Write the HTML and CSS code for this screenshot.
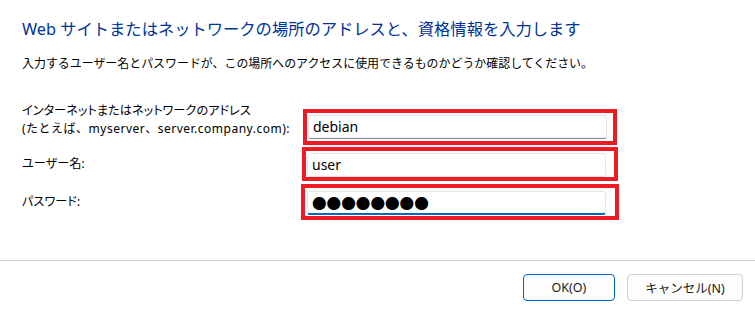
FILE: index.html
```html
<!DOCTYPE html>
<html lang="ja">
<head>
<meta charset="utf-8">
<title>資格情報の入力</title>
<link rel="stylesheet" href="styles.css">
</head>
<body>
<div class="dialog">
  <div class="content">
    <h1 class="title">Web サイトまたはネットワークの場所のアドレスと、資格情報を入力します</h1>
    <p class="desc">入力するユーザー名とパスワードが、この場所へのアクセスに使用できるものかどうか確認してください。</p>
    <div class="form">
      <div class="label label-top"><span class="kana">インターネットまたはネットワークのアドレス</span><br><span class="example">(たとえば、myserver、server.company.com):</span></div>
      <div class="mark mark-1"><div class="field field-default">debian</div></div>
      <div class="label"><span class="kana">ユーザー名:</span></div>
      <div class="mark mark-2"><div class="field field-plain">user</div></div>
      <div class="label"><span class="kana">パスワード:</span></div>
      <div class="mark mark-3"><div class="field field-focus"><span class="dots">●●●●●●●●</span></div></div>
    </div>
  </div>
  <div class="footer">
    <button class="btn btn-primary">OK(O)</button>
    <button class="btn">キャンセル(N)</button>
  </div>
</div>
</body>
</html>
```

FILE: styles.css
```css
html, body {
  margin: 0;
  padding: 0;
  background: #ffffff;
}
body {
  width: 755px;
  height: 312px;
  overflow: hidden;
  font-family: "Noto Sans", "Noto Sans CJK JP", sans-serif;
  color: #000;
}
.dialog {
  display: flex;
  flex-direction: column;
  height: 312px;
}
.content {
  padding: 17px 0 0 22px;
  height: 260px;
  box-sizing: border-box;
}
.title {
  margin: 0;
  font-weight: normal;
  font-size: 16.3px;
  line-height: 24px;
  color: #003399;
}
.desc {
  margin: 14px 0 0 0;
  font-size: 11.95px;
  line-height: 18px;
}
.form {
  margin-top: 36px;
  display: grid;
  grid-template-columns: 279px auto;
  row-gap: 2px;
  align-items: center;
  justify-items: start;
}
.label {
  font-size: 12px;
  line-height: 18px;
}
.kana {
  font-size: 12.2px;
  font-feature-settings: "palt";
}
.example {
  letter-spacing: 0.5px;
}
.label-top {
  align-self: start;
  margin-top: -7px;
}
.mark {
  border: 4px solid #ed1c24;
  box-sizing: border-box;
}
.mark-1 {
  width: 314px;
  height: 36px;
  padding: 2px 6px 2px 1px;
  margin-left: 2px;
}
.mark-2 {
  width: 316px;
  height: 34px;
  padding: 2px 8px 1px 1px;
  margin-left: 1px;
}
.mark-3 {
  width: 318px;
  height: 36px;
  padding: 3px 9px 1px 2px;
  margin-top: 1px;
}
.field {
  height: 24px;
  box-sizing: border-box;
  background: #fff;
  border: 1px solid #e5e5e5;
  border-radius: 3px;
  padding: 0 0 0 4px;
  font-family: "Noto Sans", sans-serif;
  font-size: 14px;
  line-height: 22px;
  display: flex;
  align-items: center;
}
.field-default {
  border-bottom: 1px solid #868686;
}
.field-focus {
  border-bottom: 2px solid #0067c0;
}
.dots {
  font-family: "Noto Sans CJK JP", sans-serif;
  font-size: 14.6px;
  line-height: 20px;
}
.footer {
  border-top: 1px solid #cfcfcf;
  flex: 1;
  display: flex;
  justify-content: flex-end;
  align-items: flex-start;
  gap: 12px;
  padding: 13px 12px 0 0;
}
.btn {
  height: 27px;
  box-sizing: border-box;
  background: #fdfdfd;
  border: 1px solid #d0d0d0;
  border-radius: 4px;
  font-family: "Noto Sans", "Noto Sans CJK JP", sans-serif;
  font-size: 12.5px;
  color: #1a1a1a;
  padding: 0;
  width: 116px;
}
.btn-primary {
  width: 92px;
  border-color: #0067c0;
}
```
